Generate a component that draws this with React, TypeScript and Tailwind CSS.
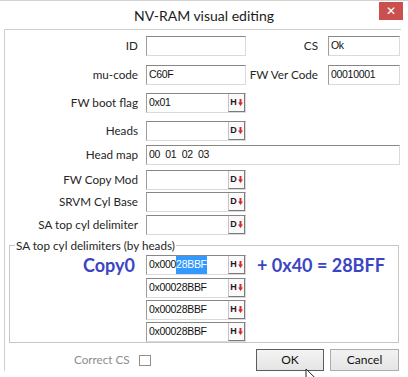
import React from "react";

const ui = "font-['Lato','Open_Sans',sans-serif]";
const mono = "font-['Liberation_Sans',Arial,sans-serif]";

const DropBtn = ({ letter }: { letter: string }) => (
	<span className="ml-auto flex h-full w-[17px] items-center justify-center gap-[1px] border-l border-b border-r border-l-[#c4c4c4] border-b-[#7a7a7a] border-r-[#7a7a7a] bg-[#fafafa]">
		<span className={`${mono} text-[9px] font-bold leading-none text-[#1c1c1c]`}>{letter}</span>
		<svg width="5" height="7" viewBox="0 0 5 7">
			<path d="M1.5 0h2v3.6H5L2.5 7 0 3.6h1.5z" fill="#d52b2b" />
		</svg>
	</span>
);

interface FieldProps {
	width: string;
	value?: string;
	drop?: string;
	selected?: boolean;
}

const Field = ({ width, value, drop, selected }: FieldProps) => (
	<div
		className={`flex h-[20px] shrink-0 items-stretch border border-t-[#868686] border-l-[#9d9d9d] border-r-[#dadada] border-b-[#dadada] bg-white ${width}`}
	>
		<span className={`${mono} flex items-center whitespace-pre pl-[2px] text-[10.5px] tracking-[-0.3px] text-[#111]`}>
			{selected ? (
				<>
					0x000<span className="bg-[#3399ff] py-[1px] text-white">28BBF</span>
				</>
			) : (
				value
			)}
		</span>
		{drop && <DropBtn letter={drop} />}
	</div>
);

const Label = ({ text, width }: { text: string; width: string }) => (
	<span className={`${width} shrink-0 whitespace-nowrap text-right text-[11.7px] text-[#262626]`}>{text}</span>
);

const App = () => {
	return (
		<div className={`${ui} relative h-[377px] w-[408px] overflow-hidden border-t border-[#d3d3d3] bg-white`}>
			{/* title bar */}
			<div className="grid h-[28px] grid-cols-[1fr_auto_1fr] items-center">
				<span />
				<span className="text-[14px] text-[#1b1b1b]">NV-RAM visual editing</span>
				<span className="mr-[5px] mt-[1px] flex h-[18px] w-[24px] items-center justify-center self-start justify-self-end bg-[#c9504f] text-[12px] leading-none text-white">
					✕
				</span>
			</div>

			{/* client area */}
			<div className="ml-[4px] w-[397px] border-l border-t border-[#cfcfcf] pt-[6px]">
				<div className="flex items-center">
					<Label text="ID" width="w-[133px]" />
					<div className="ml-[8px]">
						<Field width="w-[100px]" />
					</div>
					<Label text="CS" width="w-[72px]" />
					<div className="ml-[10px]">
						<Field width="w-[72px]" value="Ok" />
					</div>
				</div>
				<div className="mt-[9px] flex items-center">
					<Label text="mu-code" width="w-[133px]" />
					<div className="ml-[8px]">
						<Field width="w-[100px]" value="C60F" />
					</div>
					<Label text="FW Ver Code" width="w-[72px]" />
					<div className="ml-[10px]">
						<Field width="w-[72px]" value="00010001" />
					</div>
				</div>
				<div className="mt-[8px] flex items-center gap-[8px]">
					<Label text="FW boot flag" width="w-[133px]" />
					<Field width="w-[100px]" value="0x01" drop="H" />
				</div>
				<div className="mt-[8px] flex items-center gap-[8px]">
					<Label text="Heads" width="w-[133px]" />
					<Field width="w-[100px]" drop="D" />
				</div>
				<div className="mt-[4px] flex items-center gap-[8px]">
					<Label text="Head map" width="w-[133px]" />
					<Field width="w-[254px]" value="00  01  02  03" />
				</div>
				<div className="mt-[5px] flex items-center gap-[8px]">
					<Label text="FW Copy Mod" width="w-[133px]" />
					<Field width="w-[100px]" drop="D" />
				</div>
				<div className="mt-[2px] flex items-center gap-[8px]">
					<Label text="SRVM Cyl Base" width="w-[133px]" />
					<Field width="w-[100px]" drop="D" />
				</div>
				<div className="mt-[3px] flex items-center gap-[8px]">
					<Label text="SA top cyl delimiter" width="w-[133px]" />
					<Field width="w-[100px]" drop="D" />
				</div>

				<fieldset className="ml-[4px] mt-[2px] w-[390px] border border-[#c6c6c6]">
					<legend className="ml-[5px] px-[1px] text-[11.7px] leading-[16px] text-[#262626]">
						SA top cyl delimiters (by heads)
					</legend>
					<div className="mt-[2px] flex items-center">
						<span className="w-[125px] text-right text-[18px] font-bold leading-none text-[#3b45c4]">Copy0</span>
						<div className="ml-[11px]">
							<Field width="w-[100px]" selected drop="H" />
						</div>
						<span className="ml-[11px] text-[18px] font-bold leading-none text-[#3b45c4]">+ 0x40 = 28BFF</span>
					</div>
					<div className="ml-[136px] mt-[3px] flex flex-col gap-[2px]">
						<Field width="w-[100px]" value="0x00028BBF" drop="H" />
						<Field width="w-[100px]" value="0x00028BBF" drop="H" />
						<Field width="w-[100px]" value="0x00028BBF" drop="H" />
					</div>
				</fieldset>

				<div className="mt-[6px] flex items-center pr-[2px]">
					<span className="ml-[69px] text-[11.7px] text-[#8d8d8d]">Correct CS</span>
					<span className="ml-[9px] h-[11px] w-[12px] border border-[#8f8f8f] bg-white" />
					<button className="ml-auto h-[22px] w-[68px] border border-[#5c5c5c] bg-gradient-to-b from-[#f4f4f4] to-[#e4e4e4] text-[12px] text-[#111]">
						OK
					</button>
					<button className="ml-[6px] h-[22px] w-[69px] border border-[#acacac] bg-gradient-to-b from-[#f2f2f2] to-[#e5e5e5] text-[12px] text-[#111]">
						Cancel
					</button>
				</div>
			</div>

			{/* mouse pointer */}
			<svg className="absolute left-[305px] top-[367px]" width="12" height="18" viewBox="0 0 12 18">
				<path d="M1 1v14l3.5-3.5 2.5 5.5 2-1-2.5-5.3H11z" fill="#fff" stroke="#222" strokeWidth="1" />
			</svg>
		</div>
	);
};

export default App;
